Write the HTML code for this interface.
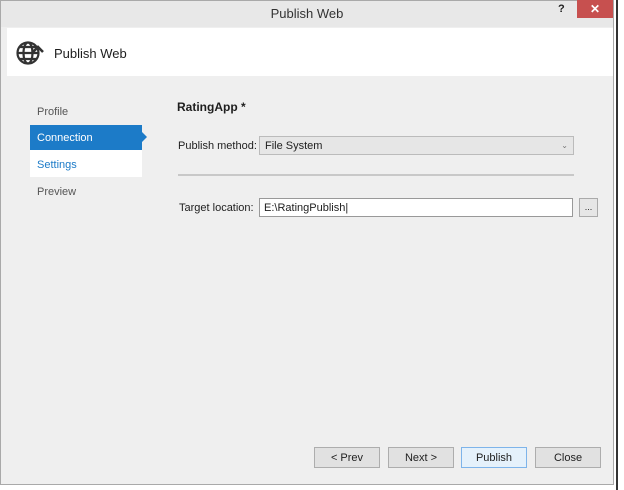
<!DOCTYPE html>
<html><head><style>
body{margin:0;width:624px;height:490px;background:#fff;font-family:"Liberation Sans",sans-serif;font-size:11px;color:#1e1e1e;position:relative;overflow:hidden}
.a{position:absolute}
.win{left:0;top:0;width:614px;height:485px;background:#efefef;border:1px solid #a9a9a9;box-sizing:border-box}
.btn{position:absolute;top:447px;width:66px;height:21px;background:#e1e1e1;border:1px solid #adadad;box-sizing:border-box;text-align:center;line-height:21px;font-size:11px}
</style></head><body>
<div class="a win"></div>
<div class="a" style="left:1px;top:1px;width:612px;height:26px;background:#e8e8e8"></div>
<div class="a" style="left:0;top:6px;width:614px;text-align:center;font-size:13px;color:#333">Publish Web</div>
<div class="a" style="left:558px;top:3px;font-size:11px;font-weight:bold">?</div>
<div class="a" style="left:577px;top:0;width:36px;height:18px;background:#c7504f;color:#fff;text-align:center;line-height:18px;font-size:12px;font-weight:bold">✕</div>
<div class="a" style="left:616px;top:0;width:2px;height:490px;background:#333"></div>
<div class="a" style="left:7px;top:28px;width:606px;height:48px;background:#fff"></div>
<svg class="a" style="left:16px;top:40px" width="28" height="26" viewBox="0 0 28 26" fill="none" stroke="#333" stroke-width="2.2"><circle cx="12" cy="13" r="10.5"/><ellipse cx="12" cy="13" rx="4.5" ry="10.5"/><path d="M2 13h20M4 7h16M4 19h16"/><path d="M16 13l6-6 5 5" stroke-width="2.6"/></svg>
<div class="a" style="left:54px;top:46px;font-size:13px">Publish Web</div>
<div class="a" style="left:37px;top:106px;color:#555">Profile</div>
<div class="a" style="left:30px;top:125px;width:112px;height:25px;background:#1c7bc8"></div>
<div class="a" style="left:142px;top:132px;width:0;height:0;border-left:5px solid #1c7bc8;border-top:5px solid transparent;border-bottom:5px solid transparent"></div>
<div class="a" style="left:37px;top:132px;color:#fff">Connection</div>
<div class="a" style="left:30px;top:150px;width:112px;height:27px;background:#fff"></div>
<div class="a" style="left:37px;top:159px;color:#1c7bc8">Settings</div>
<div class="a" style="left:37px;top:186px;color:#555">Preview</div>
<div class="a" style="left:177px;top:100px;font-weight:bold;font-size:12px">RatingApp *</div>
<div class="a" style="left:178px;top:140px">Publish method:</div>
<div class="a" style="left:259px;top:136px;width:315px;height:19px;background:#e6e6e6;border:1px solid #bbb;box-sizing:border-box;padding-left:5px;line-height:18px">File System<span style="position:absolute;right:5px;font-size:8px;color:#777">⌄</span></div>
<div class="a" style="left:178px;top:174px;width:396px;height:2px;background:#c8c8c8"></div>
<div class="a" style="left:179px;top:202px">Target location:</div>
<div class="a" style="left:259px;top:198px;width:314px;height:19px;background:#fff;border:1px solid #999;box-sizing:border-box;padding-left:4px;line-height:18px">E:\RatingPublish|</div>
<div class="a" style="left:579px;top:198px;width:19px;height:19px;background:#e6e6e6;border:1px solid #aaa;box-sizing:border-box;text-align:center;line-height:17px;font-size:9px">...</div>
<div class="btn" style="left:314px">&lt; Prev</div>
<div class="btn" style="left:388px">Next &gt;</div>
<div class="btn" style="left:461px;background:#e5f1fb;border-color:#7eb4ea">Publish</div>
<div class="btn" style="left:535px">Close</div>
</body></html>
